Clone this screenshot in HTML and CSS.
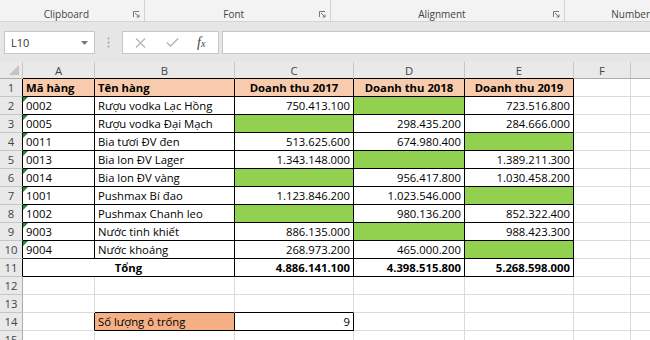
FILE: index.html
```html
<!DOCTYPE html>
<html lang="vi">

<head>
    <meta charset="UTF-8">
    <title>Đếm ô trống</title>
    <link rel="stylesheet" href="styles.css">
</head>

<body>
    <div class="ribbon">
        <div class="group g-clip">
            <span class="label">Clipboard</span>
            <svg class="launcher" width="7" height="7" viewBox="0 0 7 7"><path d="M0.5 6V0.5H6M2 2L6 6M6 3.5V6H3.5" fill="none" stroke="#777" stroke-width="1"/></svg>
        </div>
        <div class="group g-font">
            <span class="label">Font</span>
            <svg class="launcher" width="7" height="7" viewBox="0 0 7 7"><path d="M0.5 6V0.5H6M2 2L6 6M6 3.5V6H3.5" fill="none" stroke="#777" stroke-width="1"/></svg>
        </div>
        <div class="group g-align">
            <span class="label">Alignment</span>
            <svg class="launcher" width="7" height="7" viewBox="0 0 7 7"><path d="M0.5 6V0.5H6M2 2L6 6M6 3.5V6H3.5" fill="none" stroke="#777" stroke-width="1"/></svg>
        </div>
        <div class="group g-num">
            <span class="label">Number</span>
        </div>
    </div>

    <div class="formula-bar">
        <div class="namebox">
            <span>L10</span>
            <svg width="7" height="4" viewBox="0 0 7 4"><path d="M0 0H7L3.5 4Z" fill="#777"/></svg>
        </div>
        <div class="dots">
            <svg width="3" height="11" viewBox="0 0 3 11"><circle cx="1.5" cy="1.5" r="1" fill="#a0a0a0"/><circle cx="1.5" cy="5.5" r="1" fill="#a0a0a0"/><circle cx="1.5" cy="9.5" r="1" fill="#a0a0a0"/></svg>
        </div>
        <div class="fbuttons">
            <svg width="11" height="10" viewBox="0 0 11 10"><path d="M1 0.5L10 9.5M10 0.5L1 9.5" stroke="#b4b4b4" stroke-width="1.2"/></svg>
            <svg width="13" height="9" viewBox="0 0 13 9"><path d="M0.8 4.5L4.5 8L12.2 0.6" fill="none" stroke="#b4b4b4" stroke-width="1.4"/></svg>
            <span class="fx">f<small>x</small></span>
        </div>
        <div class="finput"></div>
    </div>

    <div class="sheet">
        <table>
            <colgroup>
                <col class="c-rh">
                <col class="c-a">
                <col class="c-b">
                <col class="c-c">
                <col class="c-d">
                <col class="c-e">
                <col class="c-f">
                <col class="c-g">
            </colgroup>
            <tr class="heads">
                <th class="corner"><span class="tri"></span></th>
                <th class="bk">A</th>
                <th class="bk">B</th>
                <th class="bk">C</th>
                <th class="bk">D</th>
                <th class="bk">E</th>
                <th>F</th>
                <th></th>
            </tr>
            <tr>
                <td class="rh bk">1</td>
                <td class="b hd">Mã hàng</td>
                <td class="b hd">Tên hàng</td>
                <td class="b hd mid">Doanh thu 2017</td>
                <td class="b hd mid">Doanh thu 2018</td>
                <td class="b hd mid">Doanh thu 2019</td>
                <td></td>
                <td></td>
            </tr>
            <tr>
                <td class="rh bk">2</td>
                <td class="b t">0002</td>
                <td class="b">Rượu vodka Lạc Hồng</td>
                <td class="b num">750.413.100</td>
                <td class="b empty"></td>
                <td class="b num">723.516.800</td>
                <td></td>
                <td></td>
            </tr>
            <tr>
                <td class="rh bk">3</td>
                <td class="b t">0005</td>
                <td class="b">Rượu vodka Đại Mạch</td>
                <td class="b empty"></td>
                <td class="b num">298.435.200</td>
                <td class="b num">284.666.000</td>
                <td></td>
                <td></td>
            </tr>
            <tr>
                <td class="rh bk">4</td>
                <td class="b t">0011</td>
                <td class="b">Bia tươi ĐV đen</td>
                <td class="b num">513.625.600</td>
                <td class="b num">674.980.400</td>
                <td class="b empty"></td>
                <td></td>
                <td></td>
            </tr>
            <tr>
                <td class="rh bk">5</td>
                <td class="b t">0013</td>
                <td class="b">Bia lon ĐV Lager</td>
                <td class="b num">1.343.148.000</td>
                <td class="b empty"></td>
                <td class="b num">1.389.211.300</td>
                <td></td>
                <td></td>
            </tr>
            <tr>
                <td class="rh bk">6</td>
                <td class="b t">0014</td>
                <td class="b">Bia lon ĐV vàng</td>
                <td class="b empty"></td>
                <td class="b num">956.417.800</td>
                <td class="b num">1.030.458.200</td>
                <td></td>
                <td></td>
            </tr>
            <tr>
                <td class="rh bk">7</td>
                <td class="b t">1001</td>
                <td class="b">Pushmax Bí đao</td>
                <td class="b num">1.123.846.200</td>
                <td class="b num">1.023.546.000</td>
                <td class="b empty"></td>
                <td></td>
                <td></td>
            </tr>
            <tr>
                <td class="rh bk">8</td>
                <td class="b t">1002</td>
                <td class="b">Pushmax Chanh leo</td>
                <td class="b empty"></td>
                <td class="b num">980.136.200</td>
                <td class="b num">852.322.400</td>
                <td></td>
                <td></td>
            </tr>
            <tr>
                <td class="rh bk">9</td>
                <td class="b t">9003</td>
                <td class="b">Nước tinh khiết</td>
                <td class="b num">886.135.000</td>
                <td class="b empty"></td>
                <td class="b num">988.423.300</td>
                <td></td>
                <td></td>
            </tr>
            <tr>
                <td class="rh bk">10</td>
                <td class="b t">9004</td>
                <td class="b">Nước khoáng</td>
                <td class="b num">268.973.200</td>
                <td class="b num">465.000.200</td>
                <td class="b empty"></td>
                <td></td>
                <td></td>
            </tr>
            <tr>
                <td class="rh bk">11</td>
                <td class="b mid bold" colspan="2">Tổng</td>
                <td class="b num bold">4.886.141.100</td>
                <td class="b num bold">4.398.515.800</td>
                <td class="b num bold">5.268.598.000</td>
                <td></td>
                <td></td>
            </tr>
            <tr>
                <td class="rh">12</td>
                <td></td>
                <td></td>
                <td></td>
                <td></td>
                <td></td>
                <td></td>
                <td></td>
            </tr>
            <tr>
                <td class="rh">13</td>
                <td></td>
                <td class="bb"></td>
                <td class="bb"></td>
                <td></td>
                <td></td>
                <td></td>
                <td></td>
            </tr>
            <tr>
                <td class="rh">14</td>
                <td class="br"></td>
                <td class="b count">Số lượng ô trống</td>
                <td class="b num">9</td>
                <td></td>
                <td></td>
                <td></td>
                <td></td>
            </tr>
            <tr>
                <td class="rh">15</td>
                <td></td>
                <td></td>
                <td></td>
                <td></td>
                <td></td>
                <td></td>
                <td></td>
            </tr>
        </table>
    </div>
</body>

</html>
```

FILE: styles.css
```css
body {
    margin: 0;
    width: 650px;
    height: 340px;
    overflow: hidden;
    background-color: #e6e6e6;
    font-family: "Open Sans", sans-serif;
}

/* ribbon group labels */
.ribbon {
    display: flex;
    align-items: flex-start;
    height: 21px;
    background-color: #f3f3f3;
    border-bottom: 1px solid #d4d4d4;
    overflow: hidden;
}

.group {
    display: flex;
    align-items: center;
    height: 21px;
    padding-top: 6px;
    box-sizing: border-box;
    border-right: 1px solid #d2d2d2;
    font-size: 10px;
    color: #444;
}

.group .label {
    flex: 1;
    text-align: center;
    line-height: 14px;
}

.launcher {
    margin: 2px 4px 0 0;
}

.g-clip {
    width: 148px;
}

.g-font {
    width: 190px;
    padding-left: 4px;
}

.g-align {
    width: 240px;
}

.g-num {
    flex: 1;
    border-right: none;
    padding-left: 46px;
}

.g-num .label {
    flex: none;
    white-space: nowrap;
}

/* formula bar */
.formula-bar {
    display: flex;
    height: 23px;
    margin-top: 9px;
    padding-left: 4px;
}

.namebox,
.fbuttons,
.finput {
    box-sizing: border-box;
    height: 23px;
    background-color: #fff;
    border: 1px solid #c6c6c6;
}

.namebox {
    width: 91px;
    display: flex;
    align-items: center;
    justify-content: space-between;
    padding: 0 6px 0 6px;
    font-size: 11px;
    color: #333;
}

.dots {
    width: 27px;
    display: flex;
    align-items: center;
    justify-content: center;
}

.fbuttons {
    width: 97px;
    display: flex;
    align-items: center;
    padding-left: 12px;
    gap: 20px;
}

.fx {
    font-family: "Liberation Serif", serif;
    font-style: italic;
    font-size: 14px;
    color: #444;
    margin-left: -2px;
}

.fx small {
    font-size: 10px;
}

.finput {
    flex: 1;
    margin-left: 3px;
    border-right: none;
}

/* sheet */
.sheet {
    margin-top: 8px;
    width: 650px;
    overflow: hidden;
    background-color: #fff;
}

table {
    border-spacing: 0;
    table-layout: fixed;
    width: 711px;
    font-size: 11.3px;
    color: #000;
}

.c-rh { width: 23px; }
.c-a { width: 72px; }
.c-b { width: 140px; }
.c-c { width: 119px; }
.c-d { width: 111px; }
.c-e { width: 109px; }
.c-f { width: 57px; }
.c-g { width: 80px; }

th {
    height: 17px;
    padding: 0;
    box-sizing: border-box;
    background-color: #e9e9e9;
    border-right: 1px solid #c6c6c6;
    border-bottom: 1px solid #ababab;
    font-weight: normal;
    color: #444;
    line-height: 15px;
}

th.bk {
    border-bottom-color: #000;
}

.corner {
    position: relative;
}

.tri {
    position: absolute;
    right: 3px;
    bottom: 3px;
    border-left: 10px solid transparent;
    border-bottom: 10px solid #c4c4c4;
}

td {
    padding: 0 3px;
    line-height: 17px;
    white-space: nowrap;
    overflow: hidden;
    border-right: 1px solid #dadada;
    border-bottom: 1px solid #dadada;
}

td.rh {
    padding: 0;
    text-align: center;
    background-color: #e9e9e9;
    color: #444;
    border-right-color: #ababab;
    border-bottom-color: #c6c6c6;
}

td.bk {
    border-right-color: #000;
}

td.b {
    border-right-color: #000;
    border-bottom-color: #000;
}

td.bb {
    border-bottom-color: #000;
}

td.br {
    border-right-color: #000;
}

.hd {
    background-color: #f8cbad;
    font-weight: bold;
}

.mid {
    text-align: center;
}

.num {
    text-align: right;
}

.bold {
    font-weight: bold;
}

.empty {
    background-color: #92d050;
}

.count {
    background-color: #f4b084;
}

/* number-stored-as-text flag */
td.t {
    position: relative;
}

td.t::before {
    content: "";
    position: absolute;
    left: 0;
    top: 0;
    border-top: 5px solid #1d8a3a;
    border-right: 5px solid transparent;
}
```
